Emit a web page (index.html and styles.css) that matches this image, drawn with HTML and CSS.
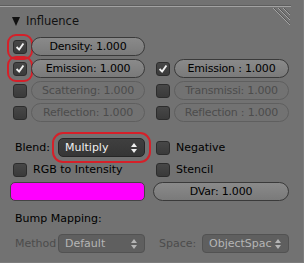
FILE: index.html
```html
<!DOCTYPE html>
<html>
<head>
    <title>Influence</title>
    <link rel="stylesheet" href="styles.css">
</head>
<body>
    <div class="panel">
        <div class="topline"></div>
        <svg class="grip" width="20" height="20" viewBox="0 0 20 20">
            <line x1="2" y1="0" x2="19" y2="17" class="g1"/>
            <line x1="7" y1="0" x2="19" y2="12" class="g1"/>
            <line x1="12" y1="0" x2="19" y2="7" class="g1"/>
            <line x1="3" y1="0" x2="19" y2="16" class="g2"/>
            <line x1="8" y1="0" x2="19" y2="11" class="g2"/>
            <line x1="13" y1="0" x2="19" y2="6" class="g2"/>
        </svg>

        <div class="header"><span class="tri"></span>Influence</div>

        <div class="grid toggles">
            <div class="cell">
                <span class="check on mark"><svg viewBox="0 0 14 14"><polyline points="3,7 6,10 11,3"/></svg></span>
                <span class="num">Density: 1.000</span>
            </div>
            <div class="cell"></div>

            <div class="cell">
                <span class="check on mark"><svg viewBox="0 0 14 14"><polyline points="3,7 6,10 11,3"/></svg></span>
                <span class="num">Emission: 1.000</span>
            </div>
            <div class="cell">
                <span class="check on"><svg viewBox="0 0 14 14"><polyline points="3,7 6,10 11,3"/></svg></span>
                <span class="num">Emission : 1.000</span>
            </div>

            <div class="cell">
                <span class="check"></span>
                <span class="num off">Scattering: 1.000</span>
            </div>
            <div class="cell">
                <span class="check"></span>
                <span class="num off">Transmissi: 1.000</span>
            </div>

            <div class="cell">
                <span class="check"></span>
                <span class="num off">Reflection: 1.000</span>
            </div>
            <div class="cell">
                <span class="check"></span>
                <span class="num off">Reflection : 1.000</span>
            </div>
        </div>

        <div class="grid options">
            <div class="cell labeled">
                <span class="label">Blend:</span>
                <span class="menu dark mark">Multiply<span class="arrows"></span></span>
            </div>
            <div class="cell">
                <span class="check"></span>
                <span class="text">Negative</span>
            </div>

            <div class="cell">
                <span class="check"></span>
                <span class="text">RGB to Intensity</span>
            </div>
            <div class="cell">
                <span class="check"></span>
                <span class="text">Stencil</span>
            </div>

            <div class="cell plain">
                <span class="swatch"></span>
            </div>
            <div class="cell plain">
                <span class="num">DVar: 1.000</span>
            </div>
        </div>

        <div class="section-label">Bump Mapping:</div>

        <div class="grid">
            <div class="cell labeled">
                <span class="label muted">Method</span>
                <span class="menu dim">Default<span class="arrows"></span></span>
            </div>
            <div class="cell labeled right">
                <span class="label muted">Space:</span>
                <span class="menu dim">ObjectSpac<span class="arrows"></span></span>
            </div>
        </div>
    </div>
</body>
</html>
```

FILE: styles.css
```css
html, body {
    margin: 0;
    padding: 0;
}
body {
    width: 304px;
    height: 263px;
    background-color: #727272;
    font-family: "DejaVu Sans", sans-serif;
    font-size: 11px;
    color: #000;
    overflow: hidden;
}
.panel {
    position: relative;
    height: 263px;
    box-sizing: border-box;
    padding-top: 5px;
    border-right: 1px solid #7c7c7c;
    border-bottom: 1px solid #7c7c7c;
}
.topline {
    width: 291px;
    height: 1px;
    background-color: #a2a2a2;
    border-top: 1px solid #5e5e5e;
}
.grip {
    position: absolute;
    left: 271px;
    top: 8px;
}
.grip line {
    stroke-width: 1;
}
.g1 {
    stroke: #a4a4a4;
}
.g2 {
    stroke: #585858;
}

.header {
    display: flex;
    align-items: center;
    height: 18px;
    margin-top: 5px;
    padding-left: 12px;
    font-size: 11.5px;
    color: #111;
}
.tri {
    width: 0;
    height: 0;
    border-left: 4.5px solid transparent;
    border-right: 4.5px solid transparent;
    border-top: 9px solid #111;
    margin-right: 6px;
}

.grid {
    display: grid;
    grid-template-columns: 135px 136px;
    column-gap: 8px;
    row-gap: 3px;
    padding-left: 10px;
}
.toggles {
    margin-top: 7px;
}
.options {
    margin-top: 16px;
}
.cell {
    display: flex;
    align-items: center;
    height: 19px;
    gap: 4px;
    padding-left: 3px;
}
.cell.plain {
    padding-left: 0;
}
.cell.labeled {
    gap: 0;
    padding-left: 5px;
}
.cell.labeled.right {
    padding-left: 6px;
}

.check {
    flex: none;
    width: 14px;
    height: 14px;
    box-sizing: border-box;
    border: 1px solid #2c2c2c;
    border-radius: 3px;
    background: linear-gradient(#474747, #3a3a3a);
}
.check svg {
    display: block;
    width: 12px;
    height: 12px;
}
.check polyline {
    fill: none;
    stroke: #f2f2f2;
    stroke-width: 2.2;
}
.mark {
    outline: 2.5px solid #d52029;
    outline-offset: 4px;
}

.num {
    flex: 1;
    height: 19px;
    box-sizing: border-box;
    border: 1px solid #3a3a3a;
    border-radius: 10px;
    background: linear-gradient(#8a8a8a, #7a7a7a);
    display: flex;
    align-items: center;
    justify-content: center;
    letter-spacing: -0.2px;
    color: #000;
}
.num.off {
    background: #727272;
    border-color: #5f5f5f;
    color: #4c4c4c;
}
.text {
    margin-left: 2px;
}

.label {
    width: 43px;
}
.label.muted {
    color: #4c4c4c;
}
.menu {
    flex: 1;
    position: relative;
    height: 19px;
    box-sizing: border-box;
    border-radius: 4px;
    display: flex;
    align-items: center;
    padding-left: 6px;
}
.menu.dark {
    background: linear-gradient(#3f3f3f, #363636);
    border: 1px solid #262626;
    color: #f0f0f0;
    outline-offset: 4px;
    border-radius: 5px;
}
.menu.dim {
    background: #5f5f5f;
    border: 1px solid #525252;
    color: #b5b5b5;
}
.arrows {
    position: absolute;
    right: 7px;
    top: 4px;
    width: 0;
    height: 0;
    border-left: 3.5px solid transparent;
    border-right: 3.5px solid transparent;
    border-bottom: 4px solid currentColor;
}
.arrows::after {
    content: "";
    position: absolute;
    left: -3.5px;
    top: 6px;
    border-left: 3.5px solid transparent;
    border-right: 3.5px solid transparent;
    border-top: 4px solid currentColor;
}

.swatch {
    flex: 1;
    height: 19px;
    box-sizing: border-box;
    border: 1px solid #444;
    border-radius: 5px;
    background-color: #ff00ff;
}

.section-label {
    height: 19px;
    display: flex;
    align-items: center;
    padding-left: 15px;
    margin-top: 8px;
    margin-bottom: 6px;
}
```
